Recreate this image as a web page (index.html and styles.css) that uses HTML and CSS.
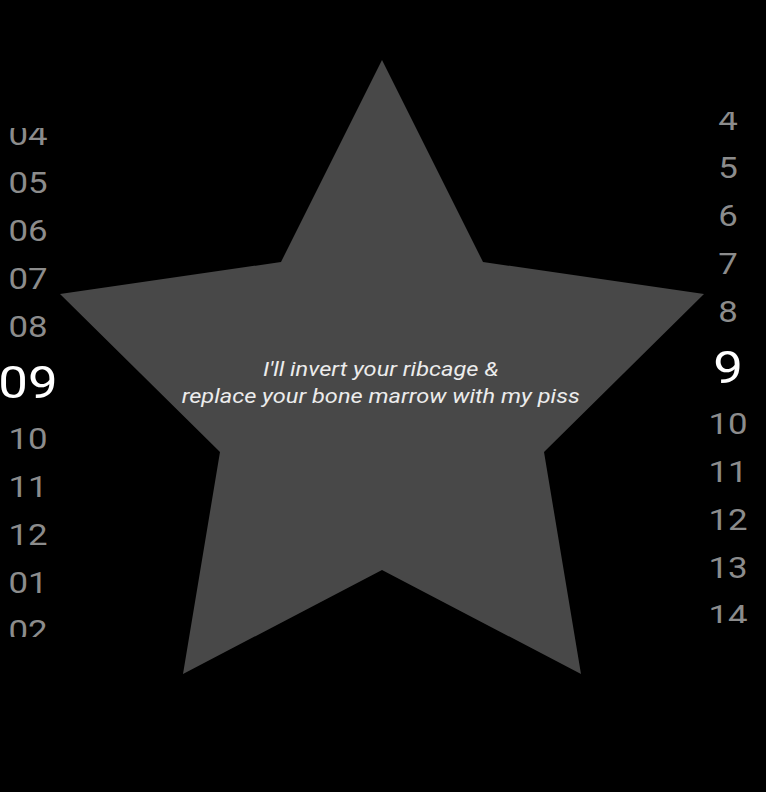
FILE: index.html
```html
<!DOCTYPE html>
<html>
<head>
<meta charset="utf-8">
<link rel="stylesheet" href="styles.css">
</head>
<body>
<div class="stage">
  <svg class="star" width="766" height="792" viewBox="0 0 766 792">
    <polygon points="382,60 483,262 704,294 544,452 581,674 382,570 183,674 220,452 60,294 281,262" fill="#484848"/>
  </svg>
  <div class="quote">I'll invert your ribcage &amp;<br>replace your bone marrow with my piss</div>
  <div class="wheel wheel-left">
    <div class="track">
      <div class="item">04</div>
      <div class="item">05</div>
      <div class="item">06</div>
      <div class="item">07</div>
      <div class="item">08</div>
      <div class="item selected">09</div>
      <div class="item">10</div>
      <div class="item">11</div>
      <div class="item">12</div>
      <div class="item">01</div>
      <div class="item">02</div>
    </div>
  </div>
  <div class="wheel wheel-right">
    <div class="track">
      <div class="item">4</div>
      <div class="item">5</div>
      <div class="item">6</div>
      <div class="item">7</div>
      <div class="item">8</div>
      <div class="item selected">9</div>
      <div class="item">10</div>
      <div class="item">11</div>
      <div class="item">12</div>
      <div class="item">13</div>
      <div class="item">14</div>
    </div>
  </div>
</div>
</body>
</html>
```
FILE: styles.css
```css
html, body {
  margin: 0;
  padding: 0;
  background: #000;
}
body {
  width: 766px;
  height: 792px;
  overflow: hidden;
  font-family: Roboto, "Liberation Sans", sans-serif;
}
.stage {
  display: grid;
  grid-template-columns: 56px 1fr 56px 10px;
  grid-template-rows: 792px;
  width: 766px;
  height: 792px;
}
.star {
  grid-column: 1 / -1;
  grid-row: 1;
  display: block;
}
.quote {
  grid-column: 1 / -1;
  grid-row: 1;
  align-self: start;
  justify-self: center;
  margin-top: 356px;
  margin-right: 4px;
  text-align: center;
  color: #ececec;
  font-style: italic;
  font-size: 20px;
  line-height: 27px;
  white-space: nowrap;
  transform: scaleX(1.18);
}
.wheel {
  grid-row: 1;
  align-self: start;
  overflow: hidden;
}
.track {
  display: flex;
  flex-direction: column;
}
.wheel-left {
  grid-column: 1;
  margin-top: 128px;
  height: 509px;
}
.wheel-left .track {
  margin-top: -17px;
}
.wheel-right {
  grid-column: 3;
  margin-top: 112px;
  height: 511px;
}
.wheel-right .track {
  margin-top: -16px;
}
.item {
  height: 48px;
  display: flex;
  align-items: center;
  justify-content: center;
  color: #8c8c8c;
  font-size: 29px;
  transform: scaleX(1.2);
}
.item.selected {
  height: 64px;
  color: #fff;
  font-size: 44px;
}
```
